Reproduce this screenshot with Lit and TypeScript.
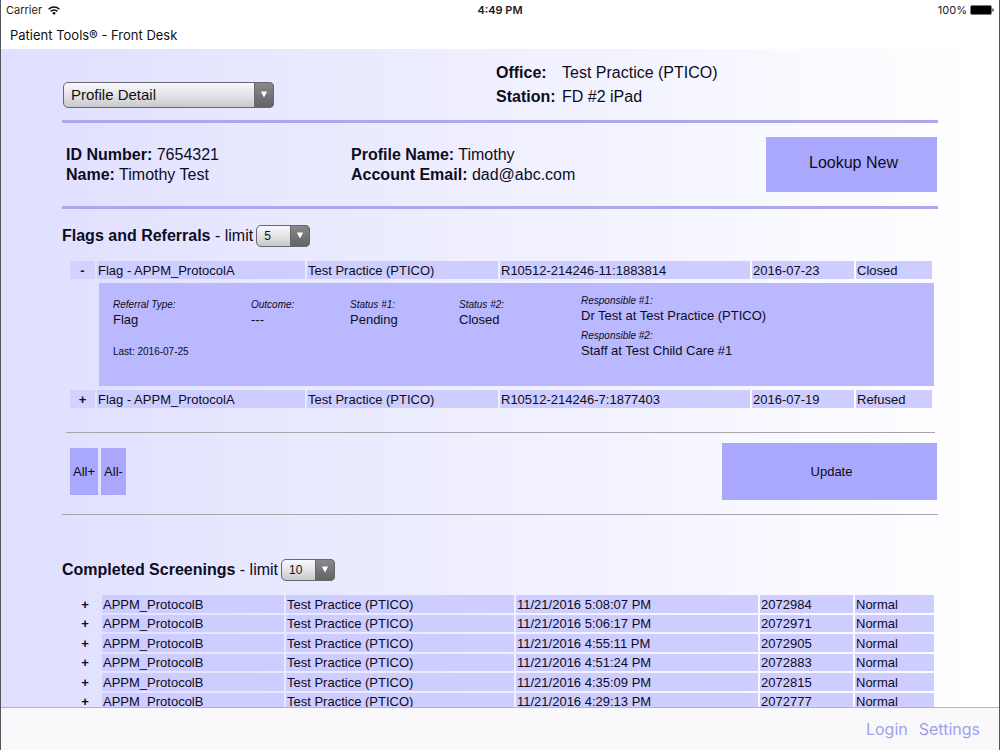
import { LitElement, html, css, nothing } from "lit";
import { customElement, property, state } from "lit/decorators.js";

interface Flag {
  name: string;
  practice: string;
  reference: string;
  date: string;
  status: string;
}

interface Screening {
  time: string;
  id: string;
}

const FLAGS: Flag[] = [
  { name: "Flag - APPM_ProtocolA", practice: "Test Practice (PTICO)", reference: "R10512-214246-11:1883814", date: "2016-07-23", status: "Closed" },
  { name: "Flag - APPM_ProtocolA", practice: "Test Practice (PTICO)", reference: "R10512-214246-7:1877403", date: "2016-07-19", status: "Refused" },
];

const SCREENINGS: Screening[] = [
  { time: "11/21/2016 5:08:07 PM", id: "2072984" },
  { time: "11/21/2016 5:06:17 PM", id: "2072971" },
  { time: "11/21/2016 4:55:11 PM", id: "2072905" },
  { time: "11/21/2016 4:51:24 PM", id: "2072883" },
  { time: "11/21/2016 4:35:09 PM", id: "2072815" },
  { time: "11/21/2016 4:29:13 PM", id: "2072777" },
];

/** Drop-down with a grey gradient face and a dark arrow block at its end. */
@customElement("picker-field")
class PickerField extends LitElement {
  @property() label = "";
  @property({ type: Array }) options: string[] = [];
  @property({ type: Boolean, reflect: true }) wide = false;

  static styles = css`
    :host {
      display: inline-grid;
      width: 54px;
      height: 22px;
      font: 12px/20px "Liberation Sans", Arial, sans-serif;
    }
    :host([wide]) {
      width: 211px;
      height: 26px;
      font-size: 15px;
    }
    select,
    .arrow {
      grid-area: 1 / 1;
    }
    select {
      appearance: none;
      box-sizing: border-box;
      width: 100%;
      height: 100%;
      margin: 0;
      padding: 0 26px 0 7px;
      border: 1px solid #67676f;
      border-radius: 5px;
      background: linear-gradient(#f8f8fc, #e6e6ea 45%, #c9c9cd);
      color: #111;
      font: inherit;
    }
    .arrow {
      justify-self: end;
      display: grid;
      place-items: center;
      width: 20px;
      border-radius: 0 5px 5px 0;
      background: linear-gradient(#8a8a8c, #626264);
      box-shadow: inset 0 0 0 1px #67676f;
      pointer-events: none;
    }
  `;

  render() {
    return html`
      <select aria-label=${this.label}>
        ${this.options.map((o) => html`<option>${o}</option>`)}
      </select>
      <span class="arrow">
        <svg width="8" height="8" viewBox="0 0 8 8"><path d="M.8 .5h6.4L4 6.5z" fill="#fff" /></svg>
      </span>
    `;
  }
}

@customElement("app-root")
class AppRoot extends LitElement {
  @state() private open = new Set<number>([0]);

  static styles = css`
    :host {
      display: flex;
      flex-direction: column;
      box-sizing: border-box;
      height: 100vh;
      overflow: hidden;
      border: solid #55555c;
      border-width: 0 1px;
      background: #fff;
      color: #0c0c1c;
      font: 16px/20px "Liberation Sans", Arial, sans-serif;
    }
    button {
      margin: 0;
      padding: 0;
      border: 0;
      background: #aaa8fd;
      color: inherit;
      font: inherit;
      cursor: pointer;
    }
    .status {
      display: grid;
      grid-template-columns: 1fr auto 1fr;
      align-items: center;
      height: 20px;
      padding: 0 5px;
      font: 11px/20px Inter, sans-serif;
      color: #222;
    }
    .carrier,
    .battery {
      display: flex;
      align-items: center;
      gap: 6px;
    }
    .battery {
      justify-content: flex-end;
      gap: 3px;
    }
    .clock {
      font-weight: 600;
    }
    .title {
      margin: 0;
      padding: 5px 9px 4px;
      font: 13px/20px Inter, sans-serif;
      color: #111;
    }
    main {
      flex: 1;
      min-height: 0;
      overflow: hidden;
      padding: 0 61px;
      background: linear-gradient(90deg, #dfdfff, #fff 98%);
    }
    .top {
      display: grid;
      grid-template-columns: 1fr 1fr;
      align-items: start;
      height: 71px;
      border-bottom: 3px solid #aca7ee;
    }
    .top picker-field {
      margin: 33px 0 0 1px;
    }
    .place {
      display: grid;
      grid-template-columns: 66px auto;
      justify-content: start;
      margin: 12px 0 0 -4px;
      line-height: 24px;
    }
    .place dt {
      font-weight: bold;
    }
    .place dd {
      margin: 0;
    }
    .profile {
      display: grid;
      grid-template-columns: 285px 1fr 171px;
      align-items: start;
      height: 83px;
      padding: 0 1px 0 4px;
      border-bottom: 3px solid #aca7ee;
    }
    .profile p {
      margin: 22px 0 0;
    }
    .lookup {
      height: 55px;
      margin-top: 14px;
      padding: 0 0 4px 4px;
    }
    h2 {
      display: flex;
      align-items: center;
      gap: 3px;
      height: 22px;
      margin: 16px 0 0;
      font: inherit;
    }
    table {
      width: 100%;
      border-spacing: 2px;
      table-layout: fixed;
      font-size: 13px;
      line-height: 15px;
    }
    td {
      height: 16px;
      padding: 1px;
      background: #cecdff;
      white-space: nowrap;
    }
    .toggle {
      display: block;
      width: 100%;
      background: none;
      font-weight: bold;
      line-height: 15px;
    }
    .flags {
      margin: 12px 4px 0 6px;
    }
    .flags td:first-child {
      background: #d3d2ff;
    }
    .flags td.blank,
    .screenings td:first-child {
      background: none;
    }
    .flags td.detail {
      padding: 2px 0 2px 2px;
      background: none;
    }
    .panel {
      display: grid;
      grid-template-columns: 138px 99px 109px 122px 1fr;
      box-sizing: border-box;
      height: 103px;
      margin-right: -2px;
      padding: 14px 0 0 14px;
      background: #bab8ff;
    }
    .panel p {
      margin: 0;
    }
    .panel i,
    .panel small {
      display: block;
      font-size: 10px;
      line-height: 15px;
    }
    .panel small {
      margin-top: 17px;
    }
    .people {
      display: grid;
      align-content: start;
      gap: 5px;
      margin-top: -4px;
    }
    hr {
      height: 1px;
      margin: 0;
      border: 0;
      background: #a5a5ab;
    }
    .above {
      margin: 22px 3px 0 4px;
    }
    .actions {
      display: flex;
      align-items: center;
      gap: 3px;
      height: 57px;
      padding: 10px 1px 14px 8px;
      font-size: 13px;
    }
    .all {
      width: 28px;
      height: 47px;
    }
    .all.less {
      width: 25px;
    }
    .update {
      width: 215px;
      height: 57px;
      margin-left: auto;
      padding-left: 4px;
    }
    .second {
      margin-top: 44px;
    }
    .screenings {
      margin: 12px 2px 0;
    }
    .screenings .toggle {
      padding-left: 4px;
    }
    .screenings tr:nth-child(even) td {
      height: 15px;
    }
    footer {
      display: flex;
      justify-content: flex-end;
      gap: 11px;
      height: 42px;
      padding-right: 19px;
      border-top: 1px solid #b4b3c4;
      background: #f9f9fb;
      font: 16px/43px Inter, sans-serif;
    }
    footer a {
      color: #a0a1ea;
      text-decoration: none;
    }
  `;

  private flip(index: number) {
    const next = new Set(this.open);
    if (!next.delete(index)) next.add(index);
    this.open = next;
  }

  private setAll(expand: boolean) {
    this.open = new Set(expand ? FLAGS.map((_, i) => i) : []);
  }

  private detail() {
    return html`<tr>
      <td class="blank"></td>
      <td class="detail" colspan="5">
        <div class="panel">
          <div>
            <p><i>Referral Type:</i>Flag</p>
            <small>Last: 2016-07-25</small>
          </div>
          <p><i>Outcome:</i>---</p>
          <p><i>Status #1:</i>Pending</p>
          <p><i>Status #2:</i>Closed</p>
          <div class="people">
            <p><i>Responsible #1:</i>Dr Test at Test Practice (PTICO)</p>
            <p><i>Responsible #2:</i>Staff at Test Child Care #1</p>
          </div>
        </div>
      </td>
    </tr>`;
  }

  render() {
    return html`
      <div class="status">
        <span class="carrier">
          Carrier
          <svg width="12" height="9" viewBox="0 0 12 9" fill="none" stroke="#111" stroke-width="1.5">
            <path d="M.6 3.2a7.7 7.7 0 0 1 10.8 0M2.6 5.4a4.8 4.8 0 0 1 6.8 0" />
            <path d="M6 9L4.1 7a2.7 2.7 0 0 1 3.8 0z" fill="#111" stroke="none" />
          </svg>
        </span>
        <span class="clock">4:49 PM</span>
        <span class="battery">
          100%
          <svg width="24" height="10" viewBox="0 0 24 10">
            <rect x=".5" y=".5" width="21" height="9" rx="1.5" fill="#000" stroke="#777" />
            <path d="M22.5 3.2c1.6.6 1.6 3 0 3.6z" fill="#000" />
          </svg>
        </span>
      </div>
      <h1 class="title">Patient Tools® - Front Desk</h1>

      <main>
        <section class="top">
          <picker-field wide label="View" .options=${["Profile Detail"]}></picker-field>
          <dl class="place">
            <dt>Office:</dt>
            <dd>Test Practice (PTICO)</dd>
            <dt>Station:</dt>
            <dd>FD #2 iPad</dd>
          </dl>
        </section>

        <section class="profile">
          <p><b>ID Number:</b> 7654321<br /><b>Name:</b> Timothy Test</p>
          <p><b>Profile Name:</b> Timothy<br /><b>Account Email:</b> dad@abc.com</p>
          <button class="lookup">Lookup New</button>
        </section>

        <h2>
          <span><b>Flags and Referrals</b> - limit</span>
          <picker-field label="Flags and Referrals limit" .options=${["5", "10", "20"]}></picker-field>
        </h2>
        <div class="flags">
          <table>
            <colgroup>
              <col style="width:25px" />
              <col style="width:208px" />
              <col style="width:191px" />
              <col />
              <col style="width:102px" />
              <col style="width:76px" />
            </colgroup>
            <tbody>
              ${FLAGS.map(
                (f, i) => html`
                  <tr>
                    <td>
                      <button class="toggle" aria-expanded=${this.open.has(i)} @click=${() => this.flip(i)}>
                        ${this.open.has(i) ? "-" : "+"}
                      </button>
                    </td>
                    <td>${f.name}</td>
                    <td>${f.practice}</td>
                    <td>${f.reference}</td>
                    <td>${f.date}</td>
                    <td>${f.status}</td>
                  </tr>
                  ${this.open.has(i) ? this.detail() : nothing}
                `
              )}
            </tbody>
          </table>
        </div>

        <hr class="above" />
        <div class="actions">
          <button class="all" @click=${() => this.setAll(true)}>All+</button>
          <button class="all less" @click=${() => this.setAll(false)}>All-</button>
          <button class="update">Update</button>
        </div>
        <hr />

        <h2 class="second">
          <span><b>Completed Screenings</b> - limit</span>
          <picker-field label="Completed Screenings limit" .options=${["10", "20", "50"]}></picker-field>
        </h2>
        <div class="screenings">
          <table>
            <colgroup>
              <col style="width:34px" />
              <col style="width:182px" />
              <col style="width:228px" />
              <col />
              <col style="width:93px" />
              <col style="width:79px" />
            </colgroup>
            <tbody>
              ${SCREENINGS.map(
                (s) => html`<tr>
                  <td><button class="toggle">+</button></td>
                  <td>APPM_ProtocolB</td>
                  <td>Test Practice (PTICO)</td>
                  <td>${s.time}</td>
                  <td>${s.id}</td>
                  <td>Normal</td>
                </tr>`
              )}
            </tbody>
          </table>
        </div>
      </main>

      <footer>
        <a href="#login">Login</a>
        <a href="#settings">Settings</a>
      </footer>
    `;
  }
}
